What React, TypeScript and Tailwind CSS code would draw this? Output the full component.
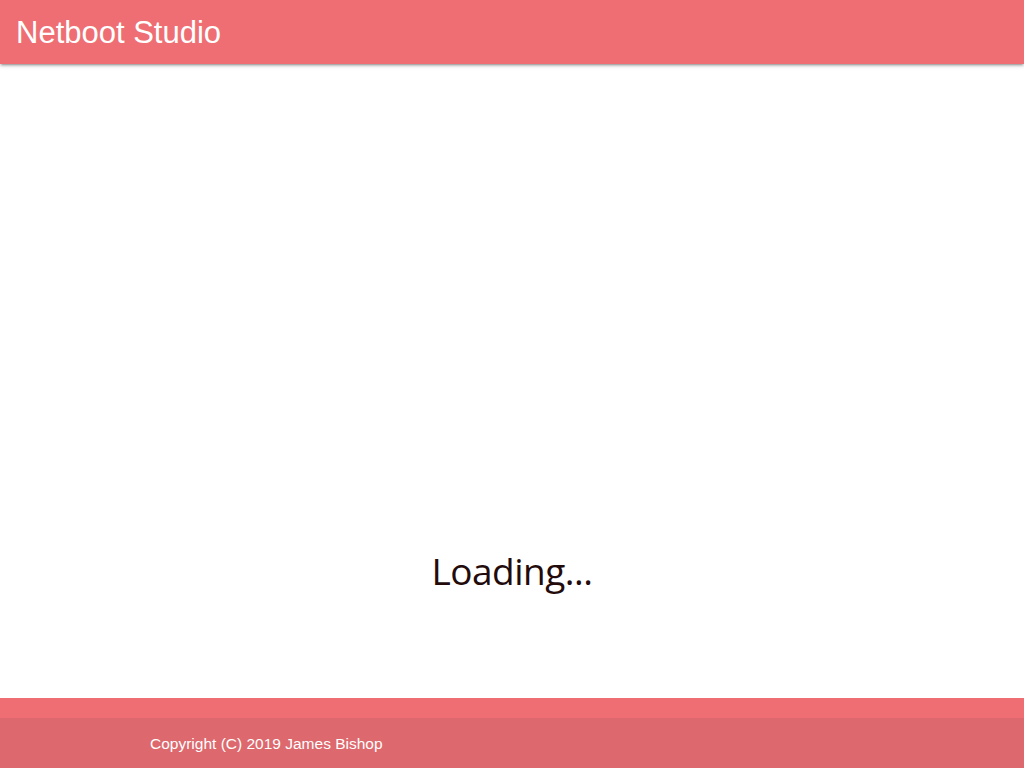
export default function App() {
  return (
    <div className="flex h-[768px] flex-col bg-white font-['Liberation_Sans',Arial,sans-serif]">
      <nav className="relative z-10 flex h-16 shrink-0 items-center bg-[#ee6e73] px-4 shadow-[0_2px_2px_0_rgba(0,0,0,0.14),0_3px_1px_-2px_rgba(0,0,0,0.12),0_1px_5px_0_rgba(0,0,0,0.2)]">
        <span className="text-[31px] leading-none text-white">Netboot Studio</span>
      </nav>
      <main className="flex flex-1 flex-col items-center pt-[488px]">
        <div className="font-['Open_Sans',sans-serif] text-[37px] leading-none tracking-[-0.5px] text-[#230b0b]">Loading...</div>
      </main>
      <footer className="shrink-0 bg-[#ee6e73] pt-5">
        <div className="flex h-[50px] items-center bg-[#dd686d] pl-[150px] pt-[2px] text-[15.5px] text-white">
          Copyright (C) 2019 James Bishop
        </div>
      </footer>
    </div>
  );
}
